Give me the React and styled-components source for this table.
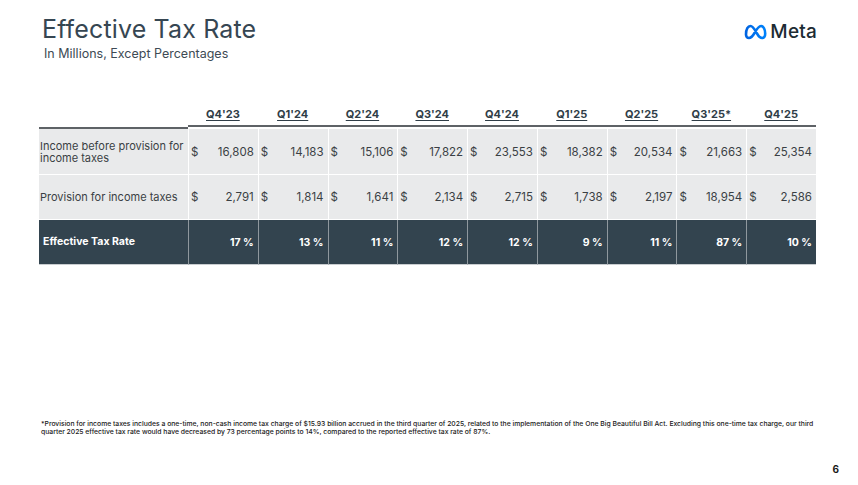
import React from "react"
import styled, { createGlobalStyle } from "styled-components"

const GlobalStyle = createGlobalStyle`
  html, body {
    margin: 0;
    padding: 0;
    background: #ffffff;
  }
  body {
    font-family: "Inter", "Liberation Sans", sans-serif;
  }
`

const Slide = styled.div`
  width: 858px;
  height: 485px;
  box-sizing: border-box;
  padding: 14px 41px 0 39px;
  display: flex;
  flex-direction: column;
  position: relative;
  overflow: hidden;
`

const Header = styled.div`
  display: flex;
  flex-direction: row;
  justify-content: space-between;
  align-items: flex-start;

  .titles {
    display: flex;
    flex-direction: column;
    padding-left: 3px;
  }
  .title {
    font-size: 25px;
    font-weight: 400;
    color: #364652;
    letter-spacing: 0.15px;
    line-height: 30px;
  }
  .subtitle {
    margin-top: 2px;
    margin-left: 2px;
    font-size: 12.5px;
    color: #3d4a54;
    line-height: 16px;
  }
`

const Logo = styled.div`
  display: flex;
  flex-direction: row;
  align-items: center;
  margin-top: 8px;
  gap: 2px;

  .word {
    font-size: 19px;
    font-weight: 500;
    color: #1c2b33;
    letter-spacing: 0.2px;
    line-height: 20px;
  }
`

const Table = styled.div`
  margin-top: 43px;
  display: grid;
  grid-template-columns: 149px repeat(9, 1fr);
  width: 777px;
`

const HeadCell = styled.div`
  height: 22px;
  box-sizing: border-box;
  padding-top: 2px;
  display: flex;
  align-items: flex-start;
  justify-content: center;
  font-size: 11px;
  font-weight: 700;
  color: #2f3d47;
  text-decoration: underline;
  text-underline-offset: 2px;
  border-bottom: 2px solid #5e6266;
`

const BlankHead = styled.div`
  height: 22px;
  border-bottom: 2px solid #5e6266;
`

const Label = styled.div`
  height: ${(p) => p.$h}px;
  box-sizing: border-box;
  background: ${(p) => (p.$dark ? "#33444f" : "#e9eaeb")};
  border-bottom: 1px solid ${(p) => (p.$dark ? "#c9cdd0" : "#ffffff")};
  display: flex;
  align-items: center;
  padding-left: ${(p) => (p.$dark ? "4px" : "1px")};
  font-size: ${(p) => (p.$dark ? "10.5px" : "11px")};
  font-weight: ${(p) => (p.$dark ? 700 : 400)};
  color: ${(p) => (p.$dark ? "#ffffff" : "#3a3f44")};
  line-height: 12px;
`

const Cell = styled.div`
  height: ${(p) => p.$h}px;
  box-sizing: border-box;
  background: ${(p) => (p.$dark ? "#33444f" : "#e9eaeb")};
  border-left: 1px solid ${(p) => (p.$dark ? "#8f989e" : "#ffffff")};
  border-bottom: 1px solid ${(p) => (p.$dark ? "#c9cdd0" : "#ffffff")};
  display: flex;
  align-items: center;
  justify-content: space-between;
  padding: 0 4px 0 2px;
  font-size: ${(p) => (p.$dark ? "10.5px" : "11.5px")};
  font-weight: ${(p) => (p.$dark ? 700 : 400)};
  color: ${(p) => (p.$dark ? "#ffffff" : "#3a3f44")};

  .cur {
    width: 8px;
  }
`

const Footnote = styled.div`
  margin-top: auto;
  margin-bottom: 50px;
  padding-left: 2px;
  font-size: 6.8px;
  line-height: 7.5px;
  font-weight: 500;
  color: #1a1a1a;
  white-space: nowrap;
`

const PageNumber = styled.div`
  position: absolute;
  right: 19px;
  bottom: 10px;
  font-size: 10px;
  font-weight: 700;
  color: #1a1a1a;
`

const quarters = ["Q4'23", "Q1'24", "Q2'24", "Q3'24", "Q4'24", "Q1'25", "Q2'25", "Q3'25*", "Q4'25"]
const income = ["16,808", "14,183", "15,106", "17,822", "23,553", "18,382", "20,534", "21,663", "25,354"]
const provision = ["2,791", "1,814", "1,641", "2,134", "2,715", "1,738", "2,197", "18,954", "2,586"]
const rates = ["17 %", "13 %", "11 %", "12 %", "12 %", "9 %", "11 %", "87 %", "10 %"]

const MetaMark = () => (
  <svg width="25" height="16" viewBox="0 0 25 16">
    <defs>
      <linearGradient id="mg" x1="0" y1="0" x2="1" y2="0">
        <stop offset="0" stopColor="#0064e1" />
        <stop offset="1" stopColor="#0082fb" />
      </linearGradient>
    </defs>
    <path
      d="M3 10.5 C3 5 5 2 7.5 2 C10 2 12 6 14 9.5 C16 13 17.5 14 19 14 C21 14 22.2 12.5 22.2 9.5 C22.2 5.5 20.5 2 18 2 C15.5 2 13.5 5.5 11.5 9 C9.5 12.5 8 14 6 14 C4.2 14 3 12.6 3 10.5 Z"
      fill="none"
      stroke="url(#mg)"
      strokeWidth="2.6"
      strokeLinejoin="round"
    />
  </svg>
)

export default () => {
  return (
    <>
      <GlobalStyle />
      <Slide>
        <Header>
          <div className="titles">
            <div className="title">Effective Tax Rate</div>
            <div className="subtitle">In Millions, Except Percentages</div>
          </div>
          <Logo>
            <MetaMark />
            <div className="word">Meta</div>
          </Logo>
        </Header>

        <Table>
          <BlankHead />
          {quarters.map((q) => (
            <HeadCell key={q}>{q}</HeadCell>
          ))}

          <Label $h={46}>
            Income before provision for
            <br />
            income taxes
          </Label>
          {income.map((v, i) => (
            <Cell key={"i" + i} $h={46}>
              <span className="cur">$</span>
              <span>{v}</span>
            </Cell>
          ))}

          <Label $h={45}>Provision for income taxes</Label>
          {provision.map((v, i) => (
            <Cell key={"p" + i} $h={45}>
              <span className="cur">$</span>
              <span>{v}</span>
            </Cell>
          ))}

          <Label $h={45} $dark>
            Effective Tax Rate
          </Label>
          {rates.map((v, i) => (
            <Cell key={"r" + i} $h={45} $dark>
              <span className="cur"></span>
              <span>{v}</span>
            </Cell>
          ))}
        </Table>

        <Footnote>
          *Provision for income taxes includes a one-time, non-cash income tax charge of $15.93 billion accrued in the third quarter of 2025, related to the implementation of the One Big Beautiful Bill Act. Excluding this one-time tax charge, our third
          <br />
          quarter 2025 effective tax rate would have decreased by 73 percentage points to 14%, compared to the reported effective tax rate of 87%.
        </Footnote>
        <PageNumber>6</PageNumber>
      </Slide>
    </>
  )
}
